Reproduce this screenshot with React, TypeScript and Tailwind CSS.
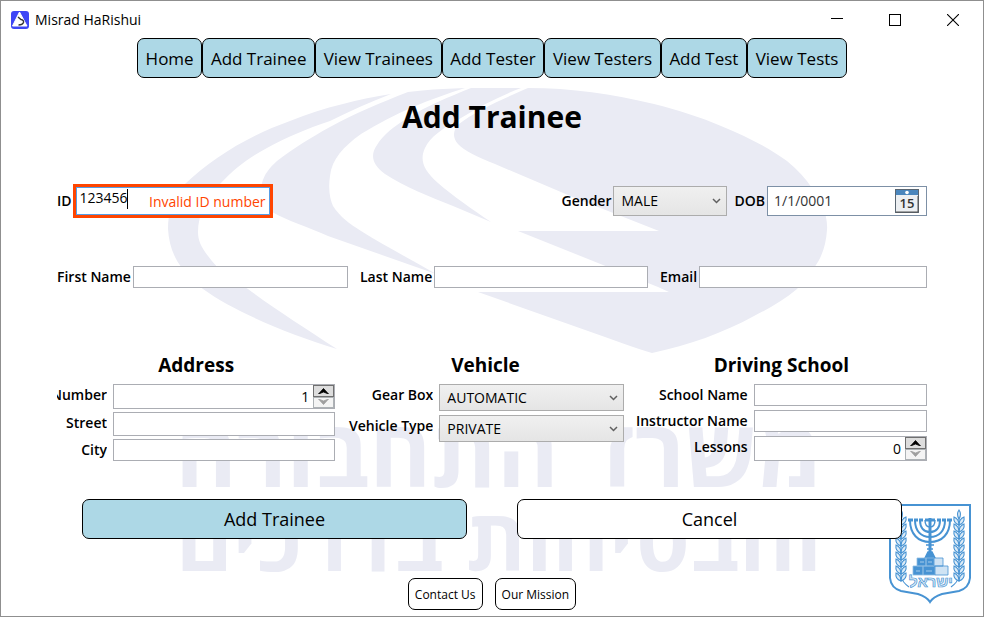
import type { ReactNode } from "react";

const navItems = ["Home", "Add Trainee", "View Trainees", "Add Tester", "View Testers", "Add Test", "View Tests"];

const fieldClass = "min-w-0 border border-[#abadb3] bg-white px-1 text-sm outline-none";
const labelClass = "shrink-0 text-sm leading-5 font-semibold";

function Watermark() {
  return (
    <div className="pointer-events-none absolute inset-0 -z-10 flex justify-center overflow-hidden" aria-hidden="true">
      <svg width="984" height="617" viewBox="0 0 984 617" className="shrink-0" fill="#eaebf4">
        <path d="M391 93C360 98 325 106 290 120C250 134 212 157 185 183C172 199 168 212 168 228C169 244 174 257 182 267C188 275 195 282 203 288C235 311 288 333 337 348C305 327 275 308 248 288C237 281 226 275 218 267C203 250 198 242 198 231C198 214 206 198 220 183C234 168 248 157 267 147C287 136 306 128 330 120C350 110 370 101 391 93Z" />
        <path d="M408 91Q430 88 465 87C430 98 395 112 361 133C343 146 332 158 330 175C328 189 330 198 333 205C340 216 350 223 361 230C385 245 410 258 436 273C400 260 364 248 328 235C308 226 288 220 272 211C263 203 260 191 262 182C264 174 269 167 277 160C294 147 310 137 330 126C355 112 380 102 408 91Z" />
        <path d="M471 87L521 87C500 95 480 105 461 117C443 127 430 136 425 147C420 158 422 168 438 182C453 195 472 208 491 221L453 205C430 196 405 186 385 173C372 163 370 154 377 144C383 134 394 125 408 117C428 104 449 96 471 87Z" />
        <path d="M528 87C572 87 612 93 654 103C678 109 700 116 721 125C748 136 769 147 787 160C798 169 806 178 812 187C822 201 828 215 827 229C826 244 822 256 814 267C808 275 803 282 797 288C784 299 770 307 754 315C723 332 689 344 652 352C634 347 620 341 605 336L478 291L669 291L658 286L518 230L659 230L626 217L575 197L495 163C478 156 464 150 458 143C452 136 453 129 459 123C475 110 505 97 528 87Z" />
        <text x="499" y="486" textAnchor="middle" direction="rtl" fontSize="94" fontWeight="700" fontFamily="Open Sans, sans-serif">משרד התחבורה</text>
        <text x="499" y="570" textAnchor="middle" direction="rtl" fontSize="86" fontWeight="700" fontFamily="Open Sans, sans-serif">והבטיחות בדרכים</text>
      </svg>
    </div>
  );
}

function Branch() {
  const rows = [0, 1, 2, 3, 4, 5, 6, 7, 8];
  return (
    <g stroke="#4793d3" strokeWidth="1.1" fill="#dcebf7">
      <path d="M21 16V80Q22 86 29 91" fill="none" />
      <path d="M21 14Q18 18 21 23Q24 18 21 14Z" />
      {rows.map((i) => (
        <g key={i} transform={`translate(21 ${25 + i * 7})`}>
          <path d="M0 4Q-6 2 -5 -4Q0 -2 0 4Z" />
          <path d="M0 4Q6 2 5 -4Q0 -2 0 4Z" />
        </g>
      ))}
    </g>
  );
}

function Emblem() {
  return (
    <svg width="100" height="115" viewBox="0 0 100 115" fill="none" stroke="#4793d3" role="img" aria-label="Emblem of Israel">
      <path d="M10 9H90V82Q89 92 79 95L62 98Q53 101 50 106Q47 101 38 98L21 95Q11 92 10 82Z" fill="#fff" strokeWidth="2" />
      <Branch />
      <g transform="translate(100 0) scale(-1 1)"><Branch /></g>
      <g strokeWidth="2">
        <path d="M30 24C30 38 38 46 50 46S70 38 70 24" />
        <path d="M35 24C35 35 41 41 50 41S65 35 65 24" />
        <path d="M40 24C40 32 44 36 50 36S60 32 60 24" />
        <path d="M45 24Q45 31 50 31T55 24" strokeWidth="1.4" />
        <path d="M50 22V62" strokeWidth="3" />
      </g>
      <path d="M28 24H33M34 24H38M39 24H43M45 24H55M57 24H61M62 24H66M67 24H72" strokeWidth="3" />
      <path d="M46 49H54M47 53H53M45 62L48 56H52L55 62Z" fill="#4793d3" strokeWidth="1.5" />
      <g strokeWidth="0.8" stroke="#8fbde3">
        <path d="M37 62H46V70H37ZM46 62H54V70H46ZM33 70H43V79H33ZM43 70H55V79H43Z" fill="#4793d3" />
        <path d="M54 62H63V70H54ZM55 70H68V79H55Z" fill="#cfe3f4" stroke="#4793d3" />
      </g>
      <path d="M40 66H44M48 66H52M36 75H40M46 75H52" stroke="#a5cbea" />
      <text x="51" y="91" textAnchor="middle" direction="rtl" fontSize="15" fontWeight="700" fontFamily="Liberation Sans, sans-serif" fill="#dcebf7" strokeWidth="0.7">ישראל</text>
    </svg>
  );
}

function Chevron() {
  return (
    <svg className="pointer-events-none absolute top-1/2 right-[6px] -translate-y-1/2" width="9" height="6" viewBox="0 0 9 6" fill="none" stroke="#606060" strokeWidth="1.5" aria-hidden="true">
      <path d="M1 1L4.5 4.5L8 1" />
    </svg>
  );
}

function Select({ id, value, className }: { id: string; value: string; className: string }) {
  return (
    <div className={`relative ${className}`}>
      <select id={id} defaultValue={value} className="h-full w-full appearance-none border border-[#acacac] bg-linear-to-b from-[#f0f0f0] to-[#e5e5e5] pl-[7px] text-sm outline-none">
        <option>{value}</option>
      </select>
      <Chevron />
    </div>
  );
}

function NumberBox({ id, value }: { id: string; value: string }) {
  return (
    <div className="flex h-[25px] min-w-0 flex-1 border border-[#abadb3] bg-white">
      <input id={id} defaultValue={value} inputMode="numeric" className="min-w-0 flex-1 pr-1 text-right text-sm outline-none" />
      <div className="flex w-[21px] flex-col">
        <button type="button" aria-label="Increase" className="flex flex-1 items-center justify-center border border-[#707070] bg-[#dddddd]">
          <svg width="11" height="6" viewBox="0 0 11 6"><path d="M0.5 6L5.5 0.5L10.5 6L5.5 4Z" fill="#000" stroke="#000" strokeWidth="0.8" /></svg>
        </button>
        <button type="button" aria-label="Decrease" className="flex flex-1 items-center justify-center border border-[#adb2b5] bg-[#f4f4f4]">
          <svg width="11" height="6" viewBox="0 0 11 6"><path d="M0.5 0L5.5 5.5L10.5 0L5.5 2Z" fill="#a0a0a0" stroke="#a0a0a0" strokeWidth="0.8" /></svg>
        </button>
      </div>
    </div>
  );
}

function Row({ id, label, width, children }: { id: string; label: string; width: string; children: ReactNode }) {
  return (
    <div className="flex items-start gap-[6px]">
      <label htmlFor={id} className={`${labelClass} ${width} flex justify-end overflow-hidden pt-px whitespace-nowrap`}>{label}</label>
      {children}
    </div>
  );
}

function SectionTitle({ children }: { children: ReactNode }) {
  return <h2 className="mb-[5px] text-center text-[19px] leading-7 font-bold">{children}</h2>;
}

export default function App() {
  return (
    <div className="relative isolate flex min-h-screen flex-col overflow-hidden border border-[#8f8f8f] bg-white font-['Open_Sans','Noto_Sans',sans-serif] text-black">
      <Watermark />
      <div className="absolute right-[3px] bottom-[5px] -z-10"><Emblem /></div>

      <header className="flex h-[37px] items-center justify-between pr-6 pl-[10px]">
        <div className="flex items-center gap-[6px]">
          <svg width="18" height="18" viewBox="0 0 18 18" aria-hidden="true">
            <rect width="18" height="18" rx="3" fill="#3d46f5" />
            <path d="M8.5 1L16 15H1.5Z" fill="#fff" stroke="#fff" strokeLinejoin="round" />
            <path d="M7 6L10 8.5Q13 9 12.5 11.5Q11.5 14 7.5 14" fill="none" stroke="#333" strokeWidth="1.4" />
          </svg>
          <span className="text-sm">Misrad HaRishui</span>
        </div>
        <div className="flex items-center gap-[46px]">
          <button type="button" aria-label="Minimize"><svg width="12" height="12" viewBox="0 0 12 12"><path d="M0 4.5H12" stroke="#000" /></svg></button>
          <button type="button" aria-label="Maximize"><svg width="12" height="12" viewBox="0 0 12 12"><rect x="0.5" y="0.5" width="11" height="11" fill="none" stroke="#000" /></svg></button>
          <button type="button" aria-label="Close"><svg width="12" height="12" viewBox="0 0 12 12"><path d="M0 0L12 12M12 0L0 12" stroke="#000" strokeWidth="1.1" /></svg></button>
        </div>
      </header>

      <nav className="mx-auto flex h-10 w-[710px] max-w-full">
        {navItems.map((item) => (
          <button key={item} type="button" className="flex-auto rounded-[7px] border border-black bg-[#add8e6] pt-[2px] text-[17px] whitespace-nowrap">{item}</button>
        ))}
      </nav>

      <form className="px-14" onSubmit={(e) => e.preventDefault()}>
        <h1 className="mt-[19px] text-center text-3xl leading-10 font-bold">Add Trainee</h1>

        <div className="mt-[47px] flex items-center justify-between">
          <div className="flex items-center gap-px">
            <label htmlFor="id" className={labelClass}>ID</label>
            <div className="relative h-[34px] w-[200px] border-3 border-[#ff4500] bg-white">
              <input id="id" defaultValue="123456" className="block h-full w-full border border-[#569de5] pb-2 pl-[3px] text-sm outline-none" />
              <span className="absolute top-[2px] left-[51px] h-5 w-px bg-black" />
              <span className="absolute top-[5px] right-1 text-sm text-[#ff4500]">Invalid ID number</span>
            </div>
          </div>
          <div className="flex items-center gap-[2px]">
            <label htmlFor="gender" className={labelClass}>Gender</label>
            <Select id="gender" value="MALE" className="mr-[5px] h-[30px] w-[114px]" />
            <label htmlFor="dob" className={labelClass}>DOB</label>
            <div className="flex h-[30px] w-[160px] items-center border border-[#7d90a6] bg-white pr-[7px]">
              <input id="dob" defaultValue="1/1/0001" className="min-w-0 flex-1 pl-[6px] text-sm text-[#333333] outline-none" />
              <button type="button" aria-label="Open calendar">
                <svg width="24" height="24" viewBox="0 0 24 24">
                  <rect x="0.5" y="0.5" width="23" height="23" fill="#eceff2" stroke="#5a6672" />
                  <rect x="1" y="1" width="22" height="5" fill="#4a86bd" />
                  <circle cx="12" cy="3.5" r="1.8" fill="#fff" />
                  <path d="M23 7V23H1" fill="none" stroke="#555" />
                  <text x="12" y="19" textAnchor="middle" fontSize="13" fontWeight="600" fontFamily="Open Sans, sans-serif" fill="#333">15</text>
                </svg>
              </button>
            </div>
          </div>
        </div>

        <div className="mt-12 flex items-center gap-3">
          <div className="flex flex-[291] items-center gap-[2px]">
            <label htmlFor="first" className={labelClass}>First Name</label>
            <input id="first" className={`${fieldClass} h-[22px] flex-1`} />
          </div>
          <div className="flex flex-[288] items-center gap-[2px]">
            <label htmlFor="last" className={labelClass}>Last Name</label>
            <input id="last" className={`${fieldClass} h-[22px] flex-1`} />
          </div>
          <div className="flex flex-[267] items-center gap-[2px]">
            <label htmlFor="email" className={labelClass}>Email</label>
            <input id="email" type="email" className={`${fieldClass} h-[22px] flex-1`} />
          </div>
        </div>

        <div className="mt-[63px] grid grid-cols-[minmax(0,278fr)_minmax(0,276fr)_minmax(0,291fr)] gap-3">
          <section className="flex flex-col">
            <SectionTitle>Address</SectionTitle>
            <div className="flex flex-col gap-[3px]">
              <Row id="number" label="Number" width="w-[50px]"><NumberBox id="number" value="1" /></Row>
              <Row id="street" label="Street" width="w-[50px]"><input id="street" className={`${fieldClass} h-6 flex-1`} /></Row>
              <Row id="city" label="City" width="w-[50px]"><input id="city" className={`${fieldClass} h-[22px] flex-1`} /></Row>
            </div>
          </section>
          <section className="flex flex-col">
            <SectionTitle>Vehicle</SectionTitle>
            <div className="flex flex-col gap-1">
              <Row id="gear" label="Gear Box" width="w-[86px]"><Select id="gear" value="AUTOMATIC" className="h-[27px] flex-1" /></Row>
              <Row id="type" label="Vehicle Type" width="w-[86px]"><Select id="type" value="PRIVATE" className="h-[27px] flex-1" /></Row>
            </div>
          </section>
          <section className="flex flex-col">
            <SectionTitle>Driving School</SectionTitle>
            <div className="flex flex-col gap-1">
              <Row id="school" label="School Name" width="w-[112px]"><input id="school" className={`${fieldClass} h-[22px] flex-1`} /></Row>
              <Row id="instructor" label="Instructor Name" width="w-[112px]"><input id="instructor" className={`${fieldClass} h-[22px] flex-1`} /></Row>
              <Row id="lessons" label="Lessons" width="w-[112px]"><NumberBox id="lessons" value="0" /></Row>
            </div>
          </section>
        </div>

        <div className="mt-[38px] grid grid-cols-2 gap-[50px] px-[25px]">
          <button type="submit" className="h-10 rounded-[7px] border border-black bg-[#add8e6] text-lg">Add Trainee</button>
          <button type="button" className="h-10 rounded-[7px] border border-black bg-white text-lg">Cancel</button>
        </div>
      </form>

      <footer className="mt-[39px] mb-[6px] flex justify-center gap-3">
        <button type="button" className="h-8 rounded-[7px] border border-black bg-white px-[6px] pt-px text-xs">Contact Us</button>
        <button type="button" className="h-8 rounded-[7px] border border-black bg-white px-[6px] pt-px text-xs">Our Mission</button>
      </footer>
    </div>
  );
}
